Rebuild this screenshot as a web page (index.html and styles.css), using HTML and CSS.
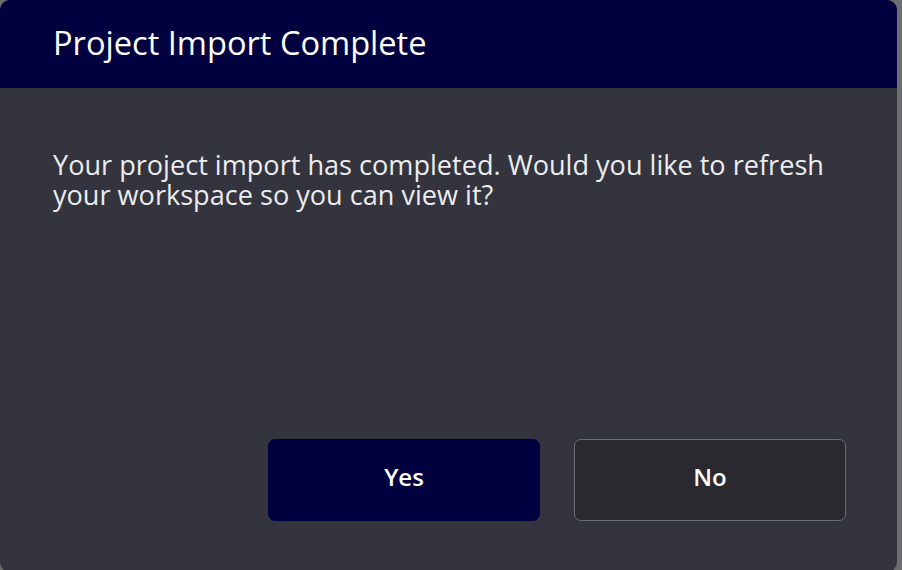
FILE: index.html
```html
<!DOCTYPE html>
<html>
<head>
<meta charset="utf-8">
<link rel="stylesheet" href="styles.css">
</head>
<body>
<div class="dialog">
  <div class="dialog-header">
    <h1 class="dialog-title">Project Import Complete</h1>
  </div>
  <div class="dialog-body">
    <p class="dialog-text">Your project import has completed. Would you like to refresh your workspace so you can view it?</p>
    <div class="dialog-actions">
      <button class="btn btn-primary">Yes</button>
      <button class="btn btn-secondary">No</button>
    </div>
  </div>
</div>
</body>
</html>
```
FILE: styles.css
```css
html, body {
  margin: 0;
  padding: 0;
  background: #6d6d70;
  width: 902px;
  height: 570px;
  overflow: hidden;
}
.dialog {
  width: 897px;
  height: 572px;
  border-radius: 10px;
  overflow: hidden;
  background: #33343d;
  display: flex;
  flex-direction: column;
  font-family: "Open Sans", "Noto Sans", sans-serif;
  color: #ffffff;
}
.dialog-header {
  height: 88px;
  background: #010140;
  display: flex;
  align-items: center;
  padding-left: 53px;
  flex-shrink: 0;
}
.dialog-title {
  margin: 0;
  font-size: 32.6px;
  font-weight: 400;
  line-height: 1;
  padding-bottom: 2px;
}
.dialog-body {
  flex: 1;
  display: flex;
  flex-direction: column;
  padding: 0 51px 51px 53px;
}
.dialog-text {
  margin: 62px 0 0 0;
  font-size: 27.1px;
  line-height: 30px;
  color: #ececee;
}
.dialog-actions {
  margin-top: auto;
  display: flex;
  justify-content: flex-end;
  gap: 34px;
}
.btn {
  width: 272px;
  height: 82px;
  border-radius: 7px;
  padding: 0 0 8px 0;
  font-family: "Open Sans", "Noto Sans", sans-serif;
  font-size: 24px;
  font-weight: 600;
  color: #ffffff;
  cursor: pointer;
}
.btn-primary {
  background: #010140;
  border: 1px solid #010140;
}
.btn-secondary {
  background: #2a292f;
  border: 1px solid #6c6c7a;
}
```
